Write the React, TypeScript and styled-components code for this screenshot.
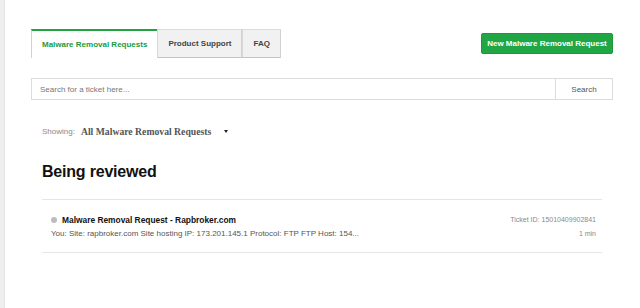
import React from "react";
import styled, { createGlobalStyle } from "styled-components";

const GlobalStyle = createGlobalStyle`
  html, body {
    margin: 0;
    padding: 0;
    background: #fff;
  }
  body {
    font-family: "Liberation Sans", Arial, sans-serif;
    color: #222;
  }
`;

const Shell = styled.div`
  display: flex;
  min-height: 308px;
  width: 640px;
`;

const SideStrip = styled.div`
  width: 4px;
  flex: none;
  background: #efefef;
  border-right: 1px solid #e4e4e4;
`;

const Main = styled.main`
  flex: 1;
  padding: 29px 27px 0 26px;
`;

const TopBar = styled.div`
  display: flex;
  justify-content: space-between;
  align-items: flex-start;
`;

const Tabs = styled.nav`
  display: flex;
`;

const Tab = styled.button<{ $active?: boolean }>`
  height: 29px;
  padding: 0 10px;
  margin: 0;
  font-family: "Liberation Sans", Arial, sans-serif;
  font-weight: 700;
  font-size: 8px;
  cursor: pointer;
  color: ${(p) => (p.$active ? "#1a9b3f" : "#444")};
  background: ${(p) => (p.$active ? "#fff" : "#f1f1f1")};
  border: 1px solid #d2d2d2;
  border-top: ${(p) => (p.$active ? "2px solid #1fa344" : "1px solid #dcdcdc")};
  border-bottom: ${(p) => (p.$active ? "none" : "1px solid #c4c4c4")};
  border-right: ${(p) => (p.$active ? "none" : "1px solid #d2d2d2")};
  & + & {
    border-left: 1px solid #d8d8d8;
  }
`;

const NewButton = styled.button`
  margin-top: 4px;
  height: 21px;
  width: 132px;
  padding: 0;
  border: 1px solid #1b9a3d;
  border-radius: 2px;
  background: #21a645;
  color: #fff;
  font-family: "Liberation Sans", Arial, sans-serif;
  font-weight: 700;
  font-size: 8px;
  cursor: pointer;
`;

const SearchRow = styled.form`
  display: flex;
  margin-top: 20px;
  height: 22px;
`;

const SearchInput = styled.input`
  flex: 1;
  box-sizing: border-box;
  height: 22px;
  border: 1px solid #dcdcdc;
  border-right: none;
  padding: 0 8px;
  font-family: "Liberation Sans", Arial, sans-serif;
  font-size: 8px;
  color: #333;
  outline: none;
  &::placeholder {
    color: #777;
  }
`;

const SearchButton = styled.button`
  box-sizing: border-box;
  width: 58px;
  height: 22px;
  border: 1px solid #dcdcdc;
  background: #fff;
  font-family: "Liberation Sans", Arial, sans-serif;
  font-size: 8px;
  color: #555;
  cursor: pointer;
`;

const Content = styled.section`
  padding: 0 11px 0 11px;
`;

const FilterRow = styled.div`
  display: flex;
  align-items: center;
  margin-top: 26px;
  height: 10px;
`;

const FilterLabel = styled.span`
  font-size: 8px;
  color: #888;
  margin-right: 6px;
`;

const FilterValue = styled.span`
  font-family: "Liberation Serif", "Times New Roman", serif;
  font-weight: 700;
  font-size: 9.7px;
  color: #555;
  margin-right: 13px;
`;

const Caret = styled.span`
  width: 0;
  height: 0;
  border-left: 2.5px solid transparent;
  border-right: 2.5px solid transparent;
  border-top: 3px solid #222;
`;

const Heading = styled.h2`
  margin: 26px 0 0;
  font-size: 16px;
  line-height: 20px;
  font-weight: 700;
  color: #111;
  letter-spacing: -0.2px;
`;

const TicketList = styled.ul`
  list-style: none;
  margin: 17px 0 0;
  padding: 0;
  border-top: 1px solid #e6e6e6;
`;

const TicketItem = styled.li`
  display: flex;
  justify-content: space-between;
  padding: 13px 6px 13px 9px;
  border-bottom: 1px solid #e6e6e6;
`;

const TicketMain = styled.div`
  display: flex;
  flex-direction: column;
  gap: 3px;
`;

const TicketTitle = styled.div`
  display: flex;
  align-items: center;
  gap: 5px;
  font-size: 8.4px;
  line-height: 12px;
  font-weight: 700;
  color: #111;
  padding-top: 1px;
`;

const StatusDot = styled.span`
  width: 6px;
  height: 6px;
  border-radius: 50%;
  background: #bdbdbd;
`;

const TicketExcerpt = styled.div`
  font-size: 8px;
  line-height: 10px;
  color: #555;
`;

const TicketMeta = styled.div`
  display: flex;
  flex-direction: column;
  align-items: flex-end;
  gap: 4px;
  font-size: 7px;
  line-height: 10px;
  color: #8a8a8a;
  padding-top: 2px;
`;

export default function App() {
  return (
    <>
      <GlobalStyle />
      <Shell>
        <SideStrip />
        <Main>
          <TopBar>
            <Tabs>
              <Tab $active>Malware Removal Requests</Tab>
              <Tab>Product Support</Tab>
              <Tab>FAQ</Tab>
            </Tabs>
            <NewButton>New Malware Removal Request</NewButton>
          </TopBar>
          <SearchRow onSubmit={(e) => e.preventDefault()}>
            <SearchInput placeholder="Search for a ticket here..." />
            <SearchButton type="submit">Search</SearchButton>
          </SearchRow>
          <Content>
            <FilterRow>
              <FilterLabel>Showing:</FilterLabel>
              <FilterValue>All Malware Removal Requests</FilterValue>
              <Caret />
            </FilterRow>
            <Heading>Being reviewed</Heading>
            <TicketList>
              <TicketItem>
                <TicketMain>
                  <TicketTitle>
                    <StatusDot />
                    Malware Removal Request - Rapbroker.com
                  </TicketTitle>
                  <TicketExcerpt>
                    You: Site: rapbroker.com Site hosting IP: 173.201.145.1 Protocol: FTP FTP Host: 154...
                  </TicketExcerpt>
                </TicketMain>
                <TicketMeta>
                  <span>Ticket ID: 15010409902841</span>
                  <span>1 min</span>
                </TicketMeta>
              </TicketItem>
            </TicketList>
          </Content>
        </Main>
      </Shell>
    </>
  );
}
